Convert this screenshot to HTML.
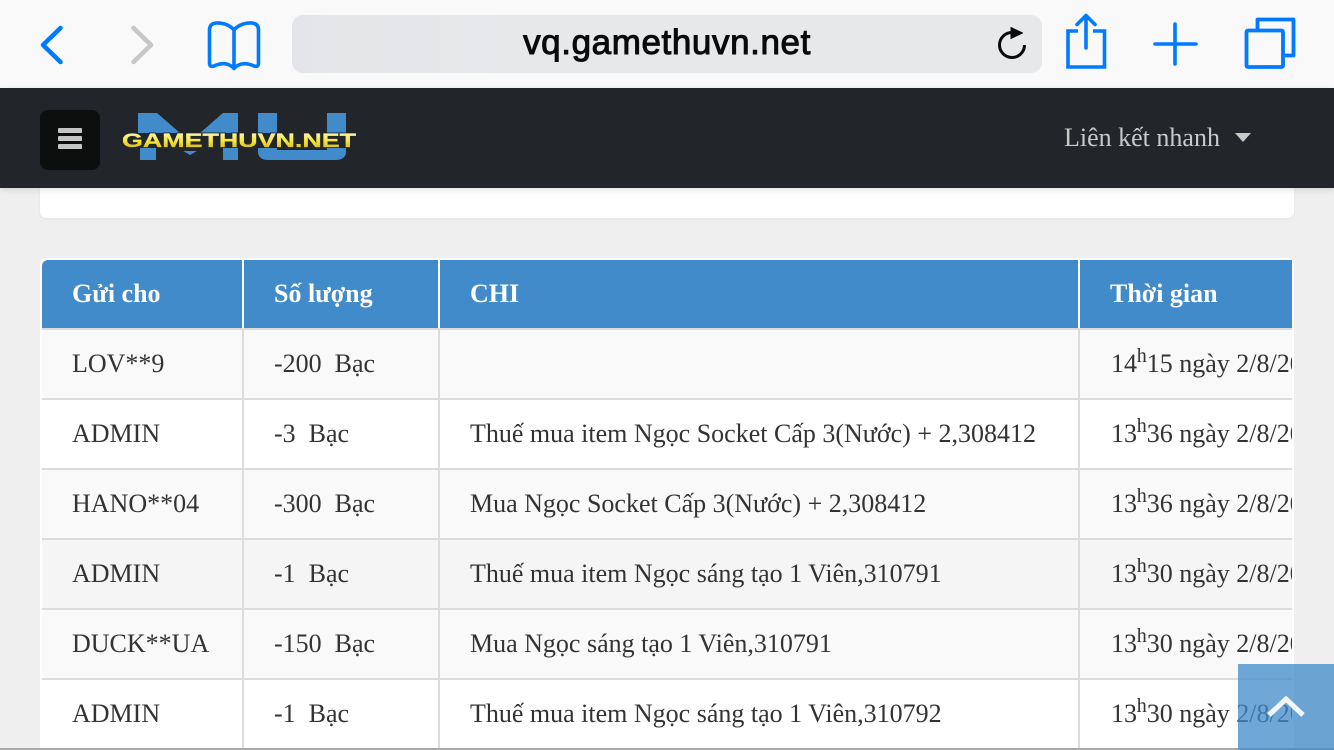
<!DOCTYPE html>
<html>
<head>
<meta charset="utf-8">
<style>
html,body{margin:0;padding:0;width:1334px;height:750px;overflow:hidden;background:#efefef}
body{position:relative;font-family:"Liberation Serif",serif;color:#333}
.a{position:absolute}
#safari{left:0;top:0;width:1334px;height:88px;background:#f9f9fa}
#url{left:292px;top:15px;width:750px;height:58px;border-radius:11px;background:linear-gradient(90deg,#e3e5e8,#e7e8ea 35%)}
#urltext{left:292px;top:21px;width:750px;text-align:center;font:normal 35px/44px "Liberation Sans",sans-serif;letter-spacing:.6px;-webkit-text-stroke:1px #0a0a0a;color:#0a0a0a}
#nav{left:0;top:88px;width:1334px;height:100px;background:#22262a;box-shadow:0 2px 6px rgba(0,0,0,.12);z-index:5}
#burger{left:40px;top:22px;width:60px;height:60px;border-radius:8px;background:#0d0f0f}
#burger i{position:absolute;left:18px;width:24px;height:4.500px;border-radius:1px;background:#c4c4c4}
#quick{left:1064px;top:33px;font-size:26px;line-height:34px;color:#c9c9c9;white-space:nowrap}
#caret{left:1235px;top:45px;width:0;height:0;border-left:8px solid transparent;border-right:8px solid transparent;border-top:9px solid #c9c9c9}
#card{left:40px;top:170px;width:1254px;height:48px;background:#fff;border-radius:0 0 6px 6px;box-shadow:0 1px 2px rgba(0,0,0,.06)}
#tw{left:40px;top:258px;width:1254px;height:490px;background:#fff;border-radius:6px 6px 0 0}
#line{left:0;top:748px;width:1334px;height:2px;background:#a9a9a9}
.hd{position:absolute;top:260px;height:68px;background:#428bca}
.r{position:absolute;left:42px;width:1250px;height:68px}
.h{position:absolute;left:42px;width:1250px;height:2px;background:#dcdcdc}
.v{position:absolute;top:330px;width:2px;height:418px;background:#dcdcdc}
.t{position:absolute;font-size:26px;line-height:34px;white-space:pre;color:#333}
.b{font-weight:bold;color:#fff}
.clip{position:absolute;left:1080px;top:330px;width:212px;height:418px;overflow:hidden}
.clip .t{left:31px}
sup{font-size:20px;line-height:0;vertical-align:10px;margin-left:-.300px}
#top{left:1238px;top:664px;width:96px;height:86px;background:rgba(66,139,202,.76);z-index:6}
</style>
</head>
<body>
<div class="a" id="safari"></div>
<div class="a" id="url"></div>
<div class="a" id="urltext">vq.gamethuvn.net</div>

<svg class="a" style="left:0;top:0;z-index:2" width="1334" height="88" viewBox="0 0 1334 88" fill="none" stroke-linecap="round" stroke-linejoin="round">
  <path d="M60.500 28 L43 45 L60.500 62" stroke="#007aff" stroke-width="4.500"/>
  <path d="M133.500 28 L151 45 L133.500 62" stroke="#c7c7c7" stroke-width="4.500"/>
  <path d="M234 30 C229 24 221 22.500 216 23 C211.500 23.500 209.500 26 209.500 30 L209.500 63 C209.500 66 211 67 214 66 C222 62.500 229 63 234 68.500 C239 63 246 62.500 254 66 C257 67 258.500 66 258.500 63 L258.500 30 C258.500 26 256.500 23.500 252 23 C247 22.500 239 24 234 30 Z M234 30 L234 67" stroke="#007aff" stroke-width="3.600"/>
  <path d="M1024.500 45 A12.500 12.500 0 1 1 1012 32.500" stroke="#0a0a0a" stroke-width="3" stroke-linecap="butt"/>
  <path d="M1011 27.500 L1022.500 33 L1011 38.500 Z" fill="#0a0a0a" stroke="#0a0a0a" stroke-width="1"/>
  <path d="M1078 31 H1068 V67 H1104.500 V31 H1093" stroke="#007aff" stroke-width="3.600" stroke-linejoin="miter" stroke-linecap="butt"/>
  <path d="M1086 48 V16 M1077 24.500 L1086 15.500 L1095 24.500" stroke="#007aff" stroke-width="3.600"/>
  <path d="M1175 24 V64 M1155 44 H1196" stroke="#007aff" stroke-width="3.600"/>
  <rect x="1246.500" y="30.500" width="36.500" height="36.500" rx="1.500" stroke="#007aff" stroke-width="3.800"/>
  <path d="M1257.500 30 V19.500 H1293.500 V55.500 H1283.500" stroke="#007aff" stroke-width="3.800"/>
</svg>

<div class="a" id="card"></div>

<div class="a" id="nav">
  <div class="a" id="burger"><i style="top:18px"></i><i style="top:26px"></i><i style="top:34px"></i></div>
  <svg class="a" style="left:110px;top:12px" width="260" height="70" viewBox="0 0 260 70">
    <defs>
      <linearGradient id="g" x1="0" y1="0" x2="0" y2="1">
        <stop offset="0" stop-color="#fbf9d4"/>
        <stop offset=".5" stop-color="#f6e63a"/>
        <stop offset="1" stop-color="#c9a70f"/>
      </linearGradient>
    </defs>
    <g fill="#428bca">
      <path d="M28 13 H47 L70 33 H28 Z"/>
      <path d="M30 48 H46 V60 H30 Z"/>
      <path d="M90 33 L113 13 H128 V33 Z"/>
      <path d="M113 48 H128 V60 H113 Z"/>
      <path d="M73 51 H87 L80 55 Z"/>
      <path d="M148 13 H167 V33 H148 Z"/>
      <path d="M217 13 H236 V33 H217 Z"/>
      <path d="M148 48 H167 V50 H217 V48 H236 V52 C236 57 232 60 226 60 H158 C152 60 148 57 148 52 Z"/>
    </g>
    <text x="12" y="47" font-family="Liberation Sans" font-weight="bold" font-size="19.500" fill="none" stroke="#23262a" stroke-width="2" textLength="234" lengthAdjust="spacingAndGlyphs">GAMETHUVN.NET</text>
    <text x="12" y="47" font-family="Liberation Sans" font-weight="bold" font-size="19.500" fill="url(#g)" stroke="url(#g)" stroke-width=".3" textLength="234" lengthAdjust="spacingAndGlyphs">GAMETHUVN.NET</text>
  </svg>
  <div class="a" id="quick">Liên kết nhanh</div>
  <div class="a" id="caret"></div>
</div>

<div class="a" id="tw"></div>
<div class="hd" style="left:42px;width:200px;border-radius:6px 0 0 0"></div>
<div class="hd" style="left:244px;width:194px"></div>
<div class="hd" style="left:440px;width:638px"></div>
<div class="hd" style="left:1080px;width:212px"></div>

<div class="r" style="top:330px;background:#f9f9f9"></div>
<div class="r" style="top:400px;background:#fff"></div>
<div class="r" style="top:470px;background:#f9f9f9"></div>
<div class="r" style="top:540px;background:#f5f5f5"></div>
<div class="r" style="top:610px;background:#f9f9f9"></div>
<div class="r" style="top:680px;background:#fff"></div>

<div class="h" style="top:328px"></div>
<div class="h" style="top:398px"></div>
<div class="h" style="top:468px"></div>
<div class="h" style="top:538px"></div>
<div class="h" style="top:608px"></div>
<div class="h" style="top:678px"></div>
<div class="v" style="left:242px"></div>
<div class="v" style="left:438px"></div>
<div class="v" style="left:1078px"></div>

<div class="t b" style="left:72px;top:277px">Gửi cho</div>
<div class="t b" style="left:274px;top:277px">Số lượng</div>
<div class="t b" style="left:470px;top:277px">CHI</div>
<div class="t b" style="left:1110px;top:277px">Thời gian</div>

<div class="t" style="left:72px;top:347px">LOV**9</div>
<div class="t" style="left:274px;top:347px">-200  Bạc</div>

<div class="t" style="left:72px;top:417px">ADMIN</div>
<div class="t" style="left:274px;top:417px">-3  Bạc</div>
<div class="t" style="left:470px;top:417px">Thuế mua item Ngọc Socket Cấp 3(Nước) + 2,308412</div>

<div class="t" style="left:72px;top:487px">HANO**04</div>
<div class="t" style="left:274px;top:487px">-300  Bạc</div>
<div class="t" style="left:470px;top:487px">Mua Ngọc Socket Cấp 3(Nước) + 2,308412</div>

<div class="t" style="left:72px;top:557px">ADMIN</div>
<div class="t" style="left:274px;top:557px">-1  Bạc</div>
<div class="t" style="left:470px;top:557px">Thuế mua item Ngọc sáng tạo 1 Viên,310791</div>

<div class="t" style="left:72px;top:627px">DUCK**UA</div>
<div class="t" style="left:274px;top:627px">-150  Bạc</div>
<div class="t" style="left:470px;top:627px">Mua Ngọc sáng tạo 1 Viên,310791</div>

<div class="t" style="left:72px;top:697px">ADMIN</div>
<div class="t" style="left:274px;top:697px">-1  Bạc</div>
<div class="t" style="left:470px;top:697px">Thuế mua item Ngọc sáng tạo 1 Viên,310792</div>

<div class="clip">
  <div class="t" style="top:17px">14<sup>h</sup>15 ngày 2/8/2018</div>
  <div class="t" style="top:87px">13<sup>h</sup>36 ngày 2/8/2018</div>
  <div class="t" style="top:157px">13<sup>h</sup>36 ngày 2/8/2018</div>
  <div class="t" style="top:227px">13<sup>h</sup>30 ngày 2/8/2018</div>
  <div class="t" style="top:297px">13<sup>h</sup>30 ngày 2/8/2018</div>
  <div class="t" style="top:367px">13<sup>h</sup>30 ngày 2/8/2018</div>
</div>

<div class="a" id="line"></div>
<div class="a" id="top">
  <svg class="a" style="left:0;top:0" width="96" height="86" viewBox="0 0 96 86" fill="none">
    <path d="M31 51 L48 35 L65 51" stroke="#fff" stroke-opacity=".92" stroke-width="5"/>
  </svg>
</div>
</body>
</html>
